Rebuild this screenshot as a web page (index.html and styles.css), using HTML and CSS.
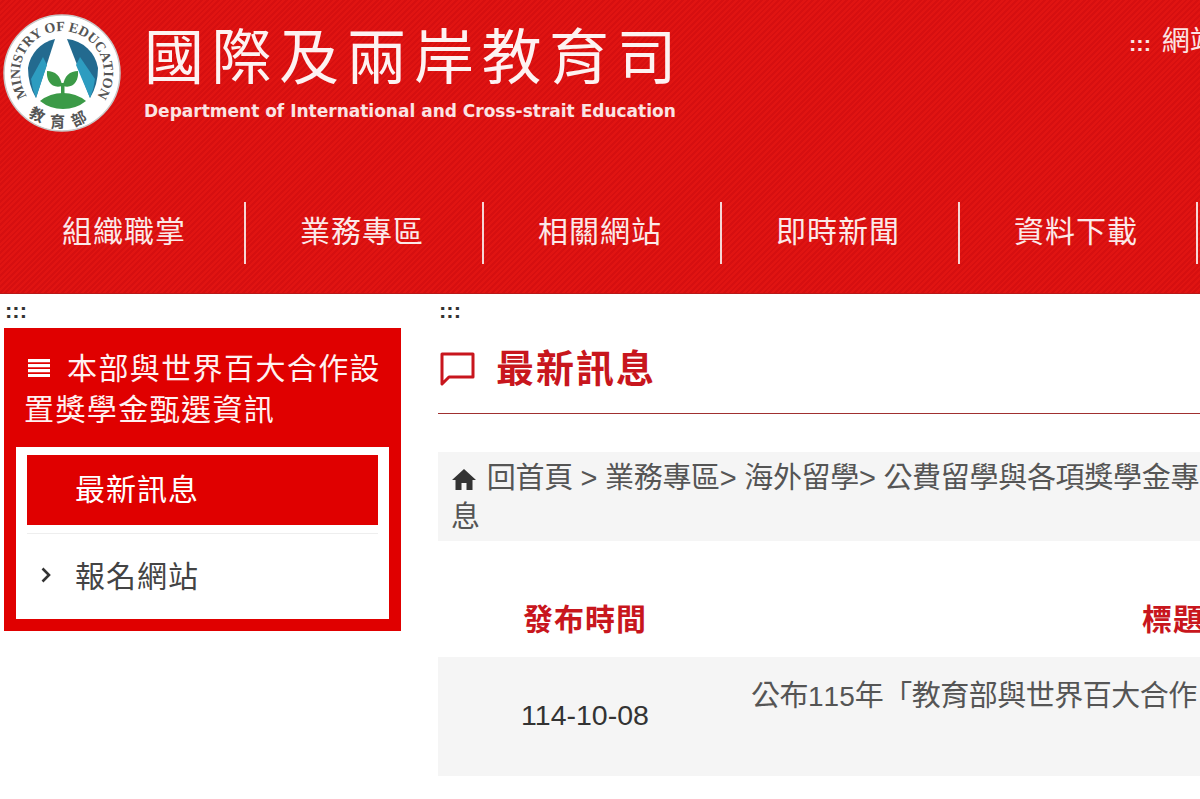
FILE: index.html
```html
<!DOCTYPE html>
<html lang="zh-Hant">
<head>
    <meta charset="UTF-8">
    <meta name="viewport" content="width=device-width, initial-scale=1.0">
    <title>國際及兩岸教育司</title>
    <link rel="stylesheet" href="styles.css">
</head>
<body>
    <header class="site-header">
        <div class="brand-row">
            <svg class="logo" viewBox="0 0 124 124" aria-hidden="true">
                <defs>
                    <path id="ringText" d="M26 83.600 A42 42 0 1 1 98 83.600"/>
                    <path id="ringCjk" d="M14 84 A52 52 0 0 0 110 84"/>
                </defs>
                <circle cx="62" cy="62" r="58" fill="#fff" stroke="#c9c9c9" stroke-width="1.500"/>
                <text class="logo-ring"><textPath href="#ringText" startOffset="50%" text-anchor="middle">MINISTRY OF EDUCATION</textPath></text>
                <text class="logo-cjk"><textPath href="#ringCjk" startOffset="50%" text-anchor="middle">教育部</textPath></text>
                <path d="M55 28 A35 35 0 0 0 28 57 Q28 74 36 87 Z" fill="#236a8f"/>
                <path d="M43 46 L31 68 Q32 78 36 87 L47 54 Z" fill="#2d9cc0"/>
                <path d="M67 28 A35 35 0 0 1 98 57 Q98 74 90 87 Z" fill="#236a8f"/>
                <path d="M80 46 L95 68 Q94 78 90 87 L76 54 Z" fill="#2d9cc0"/>
                <path d="M40 90 Q50 82 63 82 Q76 82 86 90 Q76 98 63 98 Q50 98 40 90 Z" fill="#3b9a47"/>
                <path d="M61 84 V72 H64.500 V84 Z" fill="#3b9a47"/>
                <path d="M62 75 C52 78 46 70 47 60 C55 60 61 65 62 75 Z" fill="#3b9a47"/>
                <path d="M63 75 C73 78 79 70 78 60 C70 60 64 65 63 75 Z" fill="#3b9a47"/>
            </svg>
            <div class="brand-text">
                <div class="brand-zh">國際及兩岸教育司</div>
                <div class="brand-en">Department of International and Cross-strait Education</div>
            </div>
            <a class="top-link" href="#"><span class="dots">:::</span> 網站導覽</a>
        </div>
        <nav class="main-nav">
            <a href="#">組織職掌</a>
            <a href="#">業務專區</a>
            <a href="#">相關網站</a>
            <a href="#">即時新聞</a>
            <a href="#">資料下載</a>
        </nav>
    </header>

    <div class="page-body">
        <aside class="side-col">
            <div class="dots dots-dark">:::</div>
            <div class="side-box">
                <h2 class="side-title">
                    <svg class="bars-icon" viewBox="0 0 22 18" aria-hidden="true"><path d="M0 0h22v3.200H0zM0 5h22v3.200H0zM0 10h22v3.200H0zM0 15h22v3H0z"/></svg>本部與世界百大合作設置獎學金甄選資訊
                </h2>
                <ul class="side-menu">
                    <li class="active"><a href="#">最新訊息</a></li>
                    <li>
                        <a href="#"><svg class="chevron" viewBox="0 0 10 16" aria-hidden="true"><path d="M1.500 1.500 L8 8 L1.500 14.500" fill="none" stroke="#333" stroke-width="2.600"/></svg>報名網站</a>
                    </li>
                </ul>
            </div>
        </aside>

        <main class="main-col">
            <div class="dots dots-dark">:::</div>
            <h1 class="page-title">
                <svg class="chat-icon" viewBox="0 0 36 36" aria-hidden="true"><path d="M2 3 H33 V26 H9 L2 33 Z" fill="none" stroke="#c8161d" stroke-width="3" stroke-linejoin="round"/></svg>最新訊息
            </h1>
            <div class="breadcrumb">
                <svg class="home-icon" viewBox="0 0 24 22" aria-hidden="true"><path d="M12 1 L24 12 H20.500 V22 H14.500 V15 H9.500 V22 H3.500 V12 H0 Z" fill="#333"/></svg>
                回首頁 &gt; 業務專區&gt; 海外留學&gt; 公費留學與各項獎學金專<br>息
            </div>
            <table class="news-table">
                <thead>
                    <tr><th class="col-date">發布時間</th><th class="col-title">標題</th></tr>
                </thead>
                <tbody>
                    <tr>
                        <td class="cell-date">114-10-08</td>
                        <td class="cell-title">公布<span class="num">115</span>年「教育部與世界百大合作</td>
                    </tr>
                </tbody>
            </table>
        </main>
    </div>
</body>
</html>
```

FILE: styles.css
```css
html{
    overflow: hidden;
}
body{
    margin: 0;
    width: 1600px;
    height: 799px;
    overflow: hidden;
    background: #fff;
    color: #444;
    font-family: "Liberation Sans", "Noto Sans CJK TC", sans-serif;
    font-size: 28px;
}
a{
    color: inherit;
    text-decoration: none;
}

/* header */
.site-header{
    height: 294px;
    box-sizing: border-box;
    border-bottom: 1px solid #b81818;
    background-color: #de1010;
    background-image: repeating-linear-gradient(135deg, #e01412 0, #e01412 2px, #d60f10 2px, #d60f10 4px);
    color: #fff;
}
.brand-row{
    display: flex;
    height: 202px;
    padding: 11px 0 0 0;
    box-sizing: border-box;
}
.logo{
    width: 124px;
    height: 124px;
    flex: none;
}
.logo-ring{
    font-family: "Liberation Serif", serif;
    font-size: 14px;
    font-weight: 700;
    fill: #555;
}
.logo-cjk{
    font-family: "Noto Sans CJK TC", sans-serif;
    font-size: 15px;
    font-weight: 700;
    fill: #555;
    letter-spacing: 9px;
}
.brand-text{
    margin-left: 20px;
    width: 560px;
}
.brand-zh{
    font-family: "Noto Sans CJK TC", serif;
    font-size: 60px;
    line-height: 84px;
    letter-spacing: 7.500px;
    color: #fdf2f2;
    white-space: nowrap;
}
.brand-en{
    margin-top: 5px;
    font-family: "DejaVu Sans", sans-serif;
    font-weight: 700;
    font-size: 17px;
    line-height: 22px;
    color: #fbe4e4;
    white-space: nowrap;
}
.top-link{
    margin-left: 425px;
    padding-top: 9px;
    font-size: 28px;
    line-height: 44px;
    white-space: nowrap;
    color: #fbe4e4;
}
.dots{
    font-family: "Liberation Sans", sans-serif;
    font-size: 22px;
    font-weight: 700;
}
.top-link .dots{
    margin-right: 3px;
}
.main-nav{
    display: flex;
    padding-left: 8px;
}
.main-nav a{
    width: 238px;
    height: 62px;
    box-sizing: border-box;
    padding-right: 4px;
    border-right: 2px solid #f6d6d6;
    text-align: center;
    font-size: 30px;
    line-height: 60px;
    letter-spacing: 1px;
    color: #fbe9e9;
}

/* columns */
.page-body{
    display: grid;
    grid-template-columns: 438px 1fr;
}
.side-col{
    padding-left: 4px;
}
.dots-dark{
    height: 34px;
    padding-left: 1px;
    color: #333;
    line-height: 34px;
}
.side-box{
    width: 397px;
    box-sizing: border-box;
    padding: 20px 12px 12px;
    background: #e00000;
}
.side-title{
    margin: 0 0 17px;
    padding: 0 8px;
    font-size: 30px;
    font-weight: 400;
    line-height: 41px;
    letter-spacing: 1.400px;
    color: #fff1f1;
}
.bars-icon{
    width: 22px;
    height: 18px;
    margin: 0 17px 0 4px;
    vertical-align: 2px;
    fill: #fff;
}
.side-menu{
    margin: 0;
    padding: 8px 11px 7px;
    list-style: none;
    background: #fff;
}
.side-menu li a{
    display: block;
    position: relative;
    height: 70px;
    padding-left: 48px;
    font-size: 30px;
    line-height: 70px;
    letter-spacing: 1px;
}
.side-menu li.active a{
    background: #e00000;
    color: #fff;
}
.side-menu li + li{
    margin-top: 8px;
    padding-top: 8px;
    border-top: 1px solid #eee;
}
.chevron{
    position: absolute;
    left: 14px;
    top: 25px;
    width: 10px;
    height: 16px;
}

/* main */
.page-title{
    display: flex;
    align-items: center;
    height: 86px;
    margin: 0 0 38px;
    box-sizing: border-box;
    border-bottom: 1px solid #a03030;
    color: #c8161d;
    font-size: 38px;
    font-weight: 700;
    letter-spacing: 2px;
    padding-bottom: 10px;
}
.chat-icon{
    width: 36px;
    height: 36px;
    margin: 6px 20px 0 2px;
}
.breadcrumb{
    padding: 7px 13px 4px;
    background: #f5f5f5;
    font-size: 29px;
    line-height: 39px;
    letter-spacing: -.3px;
    color: #555;
    white-space: nowrap;
}
.home-icon{
    width: 24px;
    height: 22px;
    margin: 0 3px 0 1px;
    vertical-align: -2px;
}
.news-table{
    width: 1176px;
    margin-top: 54px;
    border-collapse: collapse;
    table-layout: fixed;
}
.news-table th{
    box-sizing: border-box;
    height: 62px;
    padding: 0 0 18px;
    color: #c8161d;
    font-size: 30px;
    font-weight: 700;
    letter-spacing: 1px;
}
.col-date{
    width: 294px;
}
.news-table td{
    box-sizing: border-box;
    height: 119px;
    padding: 0;
    background: #f5f5f5;
    vertical-align: top;
}
.news-table .cell-date{
    padding-bottom: 2px;
    text-align: center;
    vertical-align: middle;
    font-size: 28.500px;
    color: #333;
}
.news-table .cell-title{
    padding: 18px 19px 0;
    color: #555;
    font-size: 29px;
    line-height: 42px;
    letter-spacing: -.5px;
    white-space: nowrap;
}
.num{
    font-kerning: none;
    font-size: 28px;
    letter-spacing: 0;
}
```
